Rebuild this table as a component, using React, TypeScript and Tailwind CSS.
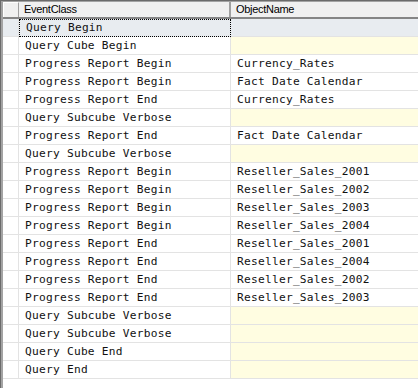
const ROWS: [string, string][] = [
  ['Query Begin', ''],
  ['Query Cube Begin', ''],
  ['Progress Report Begin', 'Currency_Rates'],
  ['Progress Report Begin', 'Fact Date Calendar'],
  ['Progress Report End', 'Currency_Rates'],
  ['Query Subcube Verbose', ''],
  ['Progress Report End', 'Fact Date Calendar'],
  ['Query Subcube Verbose', ''],
  ['Progress Report Begin', 'Reseller_Sales_2001'],
  ['Progress Report Begin', 'Reseller_Sales_2002'],
  ['Progress Report Begin', 'Reseller_Sales_2003'],
  ['Progress Report Begin', 'Reseller_Sales_2004'],
  ['Progress Report End', 'Reseller_Sales_2001'],
  ['Progress Report End', 'Reseller_Sales_2004'],
  ['Progress Report End', 'Reseller_Sales_2002'],
  ['Progress Report End', 'Reseller_Sales_2003'],
  ['Query Subcube Verbose', ''],
  ['Query Subcube Verbose', ''],
  ['Query Cube End', ''],
  ['Query End', ''],
];

const mono = "font-['DejaVu_Sans_Mono',monospace] text-[11.2px] tracking-[0.25px] text-[#111]";

export default function App() {
  return (
    <div className="w-[418px] h-[388px] bg-white overflow-hidden border-l border-t border-[#6b6b6b]">
      <div className="h-full border-l-2 border-t border-[#a3a3a3] flex flex-col">
        <div className="flex h-[17px] border-b-2 border-[#858585] bg-[#f0f0f0] font-['Liberation_Sans',sans-serif] text-[11px] tracking-[-0.3px] text-black">
          <div className="w-[16px] shrink-0 border-r border-[#a0a0a0] border-l border-t border-l-white border-t-white" />
          <div className="w-[212px] shrink-0 border-r-2 border-[#a0a0a0] pl-[5px] flex items-center">EventClass</div>
          <div className="flex-1 pl-[5px] flex items-center">ObjectName</div>
        </div>
        {ROWS.map(([ev, obj], i) => {
          const sel = i === 0;
          return (
            <div key={i} className={`flex h-[18px] shrink-0 ${mono}`}>
              <div className={`w-[16px] shrink-0 border-r border-b border-[#e3e3e3] ${sel ? 'bg-[#e8ecf0]' : ''}`} />
              <div
                className={`w-[212px] shrink-0 flex items-center pl-[6px] pt-[1px] ${
                  sel ? 'bg-[#e8ecf0] border border-dotted border-black pl-[5px]' : 'border-r border-b border-[#e3e3e3]'
                }`}
              >
                {ev}
              </div>
              <div
                className={`flex-1 flex items-center pl-[6px] pt-[1px] border-b border-[#e3e3e3] ${
                  sel ? 'bg-[#e8ecf0]' : obj ? '' : 'bg-[#fffde1]'
                }`}
              >
                {obj}
              </div>
            </div>
          );
        })}
      </div>
    </div>
  );
}
